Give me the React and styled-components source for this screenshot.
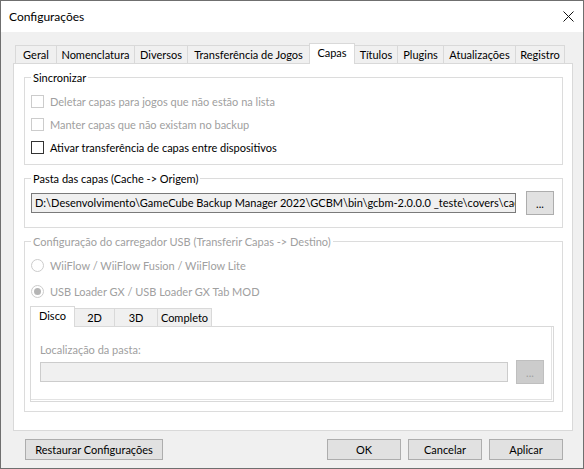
import React from "react";
import styled, { createGlobalStyle } from "styled-components";

const FONT = `Lato, "Liberation Sans", sans-serif`;

const GlobalStyle = createGlobalStyle`
  html, body { margin: 0; padding: 0; background: #fff; }
  * { box-sizing: border-box; }
`;

const mainTabs = [
  { label: "Geral", width: 42 },
  { label: "Nomenclatura", width: 79 },
  { label: "Diversos", width: 54 },
  { label: "Transferência de Jogos", width: 123 },
  { label: "Capas", width: 46, active: true },
  { label: "Títulos", width: 44 },
  { label: "Plugins", width: 47 },
  { label: "Atualizações", width: 73 },
  { label: "Registro", width: 50 },
];

const coverTabs = [
  { label: "Disco", width: 45, active: true },
  { label: "2D", width: 41 },
  { label: "3D", width: 44 },
  { label: "Completo", width: 55 },
];

const CloseIcon = () => (
  <svg width="11" height="11" viewBox="0 0 11 11">
    <path d="M0.5 0.5 L10.5 10.5 M10.5 0.5 L0.5 10.5" stroke="#111" strokeWidth="1" fill="none" />
  </svg>
);

const Settings = () => {
  return (
    <Window>
      <TitleBar>
        <span>Configurações</span>
        <CloseButton>
          <CloseIcon />
        </CloseButton>
      </TitleBar>

      <Body>
        <TabStrip $indent={2}>
          {mainTabs.map((t) => (
            <Tab key={t.label} $width={t.width} $active={t.active}>
              {t.label}
            </Tab>
          ))}
        </TabStrip>
        <TabPanel $height={368}>
          <GroupBox $height={88} $pad="12px 6px 0">
            <Legend>Sincronizar</Legend>
            <CheckRow $disabled>
              <CheckBox $disabled />
              Deletar capas para jogos que não estão na lista
            </CheckRow>
            <CheckRow $disabled>
              <CheckBox $disabled />
              Manter capas que não existam no backup
            </CheckRow>
            <CheckRow>
              <CheckBox />
              Ativar transferência de capas entre dispositivos
            </CheckRow>
          </GroupBox>

          <GroupBox $height={50} $pad="12px 6px 0">
            <Legend>Pasta das capas (Cache -&gt; Origem)</Legend>
            <PathRow>
              <TextBox $width={485}>
                D:\Desenvolvimento\GameCube Backup Manager 2022\GCBM\bin\gcbm-2.0.0.0 _teste\covers\cache
              </TextBox>
              <Button $width={28} $height={24}>
                ...
              </Button>
            </PathRow>
          </GroupBox>

          <GroupBox $height={171} $pad="12px 8px 0 5px">
            <Legend $disabled>Configuração do carregador USB (Transferir Capas -&gt; Destino)</Legend>
            <RadioRow>
              <Radio />
              WiiFlow / WiiFlow Fusion / WiiFlow Lite
            </RadioRow>
            <RadioRow>
              <Radio $checked />
              USB Loader GX / USB Loader GX Tab MOD
            </RadioRow>
            <InnerTabs>
              <TabStrip $indent={0}>
                {coverTabs.map((t) => (
                  <Tab key={t.label} $width={t.width} $active={t.active}>
                    {t.label}
                  </Tab>
                ))}
              </TabStrip>
              <InnerPanel>
                <FieldLabel>Localização da pasta:</FieldLabel>
                <PathRow $gap={8}>
                  <TextBox $width={468} $disabled />
                  <Button $width={28} $height={24} $disabled>
                    ...
                  </Button>
                </PathRow>
              </InnerPanel>
            </InnerTabs>
          </GroupBox>
        </TabPanel>

        <Footer>
          <Button $width={138} $height={21}>
            Restaurar Configurações
          </Button>
          <FooterRight>
            <Button $width={74} $height={21}>
              OK
            </Button>
            <Button $width={74} $height={21}>
              Cancelar
            </Button>
            <Button $width={74} $height={21}>
              Aplicar
            </Button>
          </FooterRight>
        </Footer>
      </Body>
    </Window>
  );
};

export default function App() {
  return (
    <>
      <GlobalStyle />
      <Settings />
    </>
  );
}

const Window = styled.div`
  width: 584px;
  height: 469px;
  border: 1px solid #6f6f6f;
  display: flex;
  flex-direction: column;
  font-family: ${FONT};
  font-size: 11px;
  color: #000;
  overflow: hidden;
`;

const TitleBar = styled.div`
  height: 31px;
  flex: none;
  background: #fff;
  display: flex;
  align-items: center;
  justify-content: space-between;
  padding-left: 8px;
  font-size: 12px;
  color: #000;
`;

const CloseButton = styled.div`
  width: 30px;
  height: 31px;
  display: flex;
  align-items: center;
  justify-content: center;
`;

const Body = styled.div`
  flex: 1;
  background: #f0f0f0;
  padding: 11px 10px 0 12px;
  display: flex;
  flex-direction: column;
`;

const TabStrip = styled.div`
  display: flex;
  align-items: flex-end;
  height: 20px;
  padding-left: ${(p) => p.$indent}px;
  position: relative;
  z-index: 1;
`;

const Tab = styled.div`
  width: ${(p) => p.$width}px;
  height: ${(p) => (p.$active ? 21 : 18)}px;
  margin-bottom: ${(p) => (p.$active ? -1 : 0)}px;
  margin-left: -1px;
  &:first-child {
    margin-left: 0;
  }
  border: 1px solid #d9d9d9;
  border-bottom: none;
  background: ${(p) => (p.$active ? "#fff" : "#f0f0f0")};
  position: relative;
  z-index: ${(p) => (p.$active ? 2 : 1)};
  display: flex;
  align-items: center;
  justify-content: center;
  padding-bottom: ${(p) => (p.$active ? 3 : 0)}px;
  white-space: nowrap;
  line-height: 13px;
`;

const TabPanel = styled.div`
  height: ${(p) => p.$height}px;
  background: #fff;
  border: 1px solid #d9d9d9;
  padding: 13px 9px 0 10px;
  display: flex;
  flex-direction: column;
  gap: 13px;
`;

const GroupBox = styled.div`
  position: relative;
  height: ${(p) => p.$height}px;
  border: 1px solid #dcdcdc;
  padding: ${(p) => p.$pad};
  flex: none;
`;

const Legend = styled.span`
  position: absolute;
  top: -7px;
  left: 6px;
  padding: 0 2px 0 2px;
  background: #fff;
  line-height: 13px;
  color: ${(p) => (p.$disabled ? "#a0a0a0" : "#000")};
  white-space: nowrap;
`;

const CheckRow = styled.div`
  height: 23px;
  display: flex;
  align-items: center;
  gap: 6px;
  color: ${(p) => (p.$disabled ? "#a0a0a0" : "#000")};
`;

const CheckBox = styled.span`
  width: 13px;
  height: 13px;
  flex: none;
  background: #fff;
  border: 1px solid ${(p) => (p.$disabled ? "#cccccc" : "#333333")};
`;

const RadioRow = styled.div`
  height: 23px;
  margin-bottom: 3px;
  padding-left: 1px;
  display: flex;
  align-items: center;
  gap: 6px;
  color: #a0a0a0;
`;

const Radio = styled.span`
  width: 13px;
  height: 13px;
  flex: none;
  border-radius: 50%;
  border: 1px solid #cccccc;
  background: #fff;
  display: flex;
  align-items: center;
  justify-content: center;
  &::after {
    content: "";
    display: ${(p) => (p.$checked ? "block" : "none")};
    width: 7px;
    height: 7px;
    border-radius: 50%;
    background: #b5b5b5;
  }
`;

const PathRow = styled.div`
  display: flex;
  align-items: center;
  gap: ${(p) => p.$gap ?? 10}px;
`;

const TextBox = styled.div`
  width: ${(p) => p.$width}px;
  height: 20px;
  flex: none;
  background: #f0f0f0;
  border: 1px solid ${(p) => (p.$disabled ? "#cccccc" : "#7a7a7a")};
  padding: 0 3px;
  line-height: 18px;
  white-space: nowrap;
  overflow: hidden;
`;

const Button = styled.div`
  width: ${(p) => p.$width}px;
  height: ${(p) => p.$height}px;
  flex: none;
  background: ${(p) => (p.$disabled ? "#cccccc" : "#e1e1e1")};
  border: 1px solid ${(p) => (p.$disabled ? "#bfbfbf" : "#adadad")};
  color: ${(p) => (p.$disabled ? "#a0a0a0" : "#000")};
  display: flex;
  align-items: center;
  justify-content: center;
  white-space: nowrap;
`;

const InnerTabs = styled.div`
  margin-top: 2px;
`;

const InnerPanel = styled.div`
  height: 76px;
  border: 1px solid #d9d9d9;
  background: #fff;
  box-shadow: inset -1px -1px 0 #fff, inset -2px -2px 0 #e3e3e3;
  padding: 16px 0 0 9px;
`;

const FieldLabel = styled.div`
  line-height: 13px;
  color: #a0a0a0;
  margin-bottom: 4px;
`;

const Footer = styled.div`
  display: flex;
  justify-content: space-between;
  padding: 8px 10px 0 12px;
`;

const FooterRight = styled.div`
  display: flex;
  gap: 7px;
`;
